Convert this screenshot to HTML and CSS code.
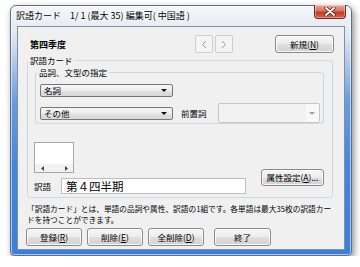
FILE: index.html
```html
<!DOCTYPE html>
<html lang="ja">
<head>
  <meta charset="UTF-8">
  <title>訳語カード</title>
  <link rel="stylesheet" href="styles.css">
</head>
<body>

  <div class="window">
    <div class="titlebar">
      <span class="title">訳語カード　1/&nbsp;1 (最大 35) 編集可( 中国語 )</span>
      <div class="close">
        <svg width="12" height="9" viewBox="0 0 12 9">
          <path d="M2 1 L10 8 M10 1 L2 8" stroke="#5a1d16" stroke-width="3.2" stroke-linecap="round"/>
          <path d="M2 1 L10 8 M10 1 L2 8" stroke="#ffffff" stroke-width="1.8" stroke-linecap="round"/>
        </svg>
      </div>
    </div>

    <div class="client">
      <div class="header">
        <b class="term">第四季度</b>
        <div class="nav">
          <div class="navbtn">
            <svg width="6" height="9" viewBox="0 0 6 9"><path d="M5 1 L1.5 4.5 L5 8" fill="none" stroke="#9a9a9a" stroke-width="1"/></svg>
          </div>
          <div class="navbtn">
            <svg width="6" height="9" viewBox="0 0 6 9"><path d="M1 1 L4.5 4.5 L1 8" fill="none" stroke="#9a9a9a" stroke-width="1"/></svg>
          </div>
        </div>
        <div class="btn btn-new">新規(<u>N</u>)</div>
      </div>

      <fieldset class="group">
        <legend>訳語カード</legend>

        <fieldset class="group inner">
          <legend>品詞、文型の指定</legend>
          <div class="combo">名詞<span class="arrow"></span></div>
          <div class="row2">
            <div class="combo">その他<span class="arrow"></span></div>
            <span class="label-prep">前置詞</span>
            <div class="combo-off"><span class="drop"><span class="arrow"></span></span></div>
          </div>
        </fieldset>

        <div class="lower">
          <div class="lower-left">
            <div class="listbox">
              <div class="lb-body"></div>
              <div class="lb-scroll">
                <svg width="4" height="5" viewBox="0 0 4 5"><path d="M3 0 L0 2.5 L3 5 Z" fill="#444"/></svg>
                <svg width="4" height="5" viewBox="0 0 4 5"><path d="M1 0 L4 2.5 L1 5 Z" fill="#444"/></svg>
              </div>
            </div>
            <div class="word-row">
              <span class="word-label">訳語</span>
              <div class="field">第４四半期</div>
            </div>
          </div>
          <div class="btn btn-attr">属性設定(<u>A</u>)...</div>
        </div>
      </fieldset>

      <p class="desc">「訳語カード」とは、単語の品詞や属性、訳語の1組です。各単語は最大35枚の訳語カー<br>ドを持つことができます。</p>

      <div class="actions">
        <div class="btn">登録(<u>R</u>)</div>
        <div class="btn">削除(<u>E</u>)</div>
        <div class="btn">全削除(<u>D</u>)</div>
        <div class="btn btn-end">終了</div>
      </div>
    </div>
  </div>

</body>
</html>
```

FILE: styles.css
```css
body {
  margin: 0;
  background: #ffffff;
  font-family: "Noto Sans CJK JP", "Noto Sans", sans-serif;
  font-size: 9px;
  line-height: 11px;
  color: #000;
}

.window {
  width: 342px;
  height: 251px;
  box-sizing: border-box;
  margin: 5px 0 0 10px;
  padding: 0 6px 5px 6px;
  border: 1px solid #5d6f86;
  border-radius: 6px 6px 4px 4px;
  background: linear-gradient(to bottom, #f4f6f9 0px, #e3e9f1 28px, #b4c9e8 55px, #6a9de0 95px, #4386dc 160px, #3a7edb 100%);
  box-shadow: 2px 3px 7px rgba(0, 0, 0, 0.45), inset 0 0 0 1px rgba(255, 255, 255, 0.55);
}

.titlebar {
  height: 20px;
  display: flex;
  align-items: flex-start;
  justify-content: space-between;
}

.title {
  margin: 4px 0 0 -1px;
  font-size: 9px;
  line-height: 11px;
  text-shadow: 0 0 5px #ffffff, 0 0 3px #ffffff;
}

.close {
  width: 30px;
  height: 13px;
  margin: -1px -1px 0 0;
  display: flex;
  align-items: center;
  justify-content: center;
  border: 1px solid #6e2c23;
  border-top: none;
  border-radius: 0 0 4px 4px;
  background: linear-gradient(to bottom, #e9a99c 0%, #d87360 45%, #c33a24 55%, #d5634a 100%);
  box-shadow: inset 0 0 0 1px rgba(255, 255, 255, 0.35);
}

.client {
  height: 224px;
  box-sizing: border-box;
  border: 1px solid #7f8fa5;
  background: #f0f0f0;
}

.header {
  display: flex;
  align-items: center;
  height: 18px;
  margin-top: 8px;
  padding: 0 10px 0 12px;
}

.term {
  width: 165px;
  font-weight: bold;
}

.nav {
  display: flex;
  gap: 2px;
}

.navbtn {
  width: 16px;
  height: 16px;
  display: flex;
  align-items: center;
  justify-content: center;
  border: 1px solid #cfcfcf;
  border-radius: 2px;
  background: #f4f4f4;
}

.btn {
  height: 18px;
  box-sizing: border-box;
  display: flex;
  align-items: center;
  justify-content: center;
  border: 1px solid #8a8a8a;
  border-radius: 3px;
  background: linear-gradient(to bottom, #f6f6f6 0%, #ececec 50%, #dfdfdf 51%, #d2d2d2 100%);
  box-shadow: inset 0 0 0 1px rgba(255, 255, 255, 0.8);
  font-size: 8.5px;
}

.btn u {
  text-underline-offset: 1px;
}

.btn-new {
  width: 59px;
  margin-left: auto;
}

.group {
  margin: 2px 0 0 9px;
  width: 306px;
  box-sizing: border-box;
  padding: 0 0 3px 0;
  border: 1px solid #d0d7dd;
  border-radius: 3px;
  min-width: 0;
}

.group legend {
  padding: 0 2px;
  line-height: 11px;
  font-size: 8.5px;
}

.group.inner {
  margin: 1px 0 0 7px;
  width: 289px;
  padding: 6px 0 0 4px;
}

.group.inner legend {
  margin-left: -3px;
}

.combo {
  position: relative;
  width: 133px;
  height: 13px;
  box-sizing: border-box;
  padding-left: 3px;
  border: 1px solid #777;
  border-radius: 2px;
  background: linear-gradient(to bottom, #f7f7f7 0%, #ececec 50%, #e0e0e0 51%, #d7d7d7 100%);
  font-size: 8.5px;
  line-height: 11px;
}

.arrow {
  position: absolute;
  right: 5px;
  top: 4px;
  width: 0;
  height: 0;
  border-left: 3px solid transparent;
  border-right: 3px solid transparent;
  border-top: 3px solid #111;
}

.row2 {
  display: flex;
  align-items: center;
  height: 20px;
  margin-top: 6px;
}

.label-prep {
  width: 37px;
  margin-left: 8px;
  font-size: 8.5px;
}

.combo-off {
  width: 102px;
  height: 20px;
  box-sizing: border-box;
  display: flex;
  justify-content: flex-end;
  border: 1px solid #c6c6c6;
  border-radius: 2px;
  background: #f2f2f2;
}

.drop {
  position: relative;
  width: 13px;
  background: #f8f8f8;
}

.drop .arrow {
  top: 8px;
  right: 4px;
  border-top-color: #a0a0a0;
}

.lower {
  display: flex;
  align-items: flex-end;
  margin: 18px 0 0 6px;
}

.listbox {
  width: 40px;
  height: 31px;
  box-sizing: border-box;
  display: flex;
  flex-direction: column;
  border: 1px solid #a8a8a8;
  background: #ffffff;
}

.lb-body {
  flex: 1;
}

.lb-scroll {
  height: 8px;
  display: flex;
  align-items: center;
  justify-content: space-between;
  padding: 0 5px 0 6px;
  background: #f2f2f2;
}

.word-row {
  display: flex;
  align-items: center;
  margin-top: 5px;
}

.word-label {
  width: 27px;
  font-size: 8.5px;
}

.field {
  width: 185px;
  height: 16px;
  box-sizing: border-box;
  padding-left: 4px;
  border: 1px solid #b9bdc4;
  background: #ffffff;
  font-size: 11.5px;
  line-height: 14px;
}

.btn-attr {
  width: 63px;
  height: 17px;
  margin: 0 0 8px 15px;
}

.desc {
  margin: 5px 0 0 9px;
  font-size: 7.7px;
  line-height: 11px;
  white-space: nowrap;
}

.actions {
  display: flex;
  gap: 5px;
  margin: 3px 0 0 8px;
}

.actions .btn {
  width: 56px;
}

.actions .btn-end {
  width: 57px;
  margin-left: 5px;
}
```
